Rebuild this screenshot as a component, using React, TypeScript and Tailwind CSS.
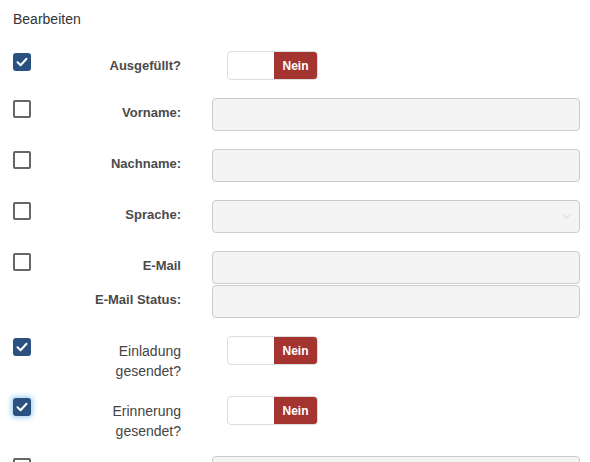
import { ChevronDown } from "lucide-react";

function CheckBox({ checked, focused }: { checked?: boolean; focused?: boolean }) {
  if (checked) {
    return (
      <div
        className={`mt-[2px] w-[18px] h-[18px] shrink-0 rounded-[3px] bg-[#2a5180] flex items-center justify-center ${
          focused ? "shadow-[0_0_5px_2px_rgba(102,175,233,0.55)]" : ""
        }`}
      >
        <svg width="12" height="10" viewBox="0 0 12 10" fill="none">
          <path d="M1.5 5.2 L4.6 8.2 L10.5 1.8" stroke="#fff" strokeWidth="2" strokeLinecap="round" strokeLinejoin="round" />
        </svg>
      </div>
    );
  }
  return <div className="mt-[2px] w-[18px] h-[18px] shrink-0 rounded-[2px] border-2 border-[#666] bg-white" />;
}

function Toggle() {
  return (
    <div className="ml-[15px] flex h-[29px] w-[91px] overflow-hidden rounded-[4px] border border-[#ddd] bg-white">
      <div className="w-[46px]" />
      <div className="flex flex-1 items-center justify-center bg-[#a3342f] text-[12px] font-bold text-white">
        Nein
      </div>
    </div>
  );
}

function Input({ select }: { select?: boolean }) {
  return (
    <div className="relative h-[33px] w-[368px] rounded-[4px] border border-[#ccc] bg-[#f4f4f4]">
      {select && (
        <ChevronDown className="absolute right-[6px] top-[9px] h-[13px] w-[13px] text-[#c4c4c4]" strokeWidth={1.5} />
      )}
    </div>
  );
}

function Row({
  check,
  label,
  children,
  className = "",
  light,
}: {
  check?: "on" | "off" | "focus" | "none";
  label: React.ReactNode;
  children: React.ReactNode;
  className?: string;
  light?: boolean;
}) {
  return (
    <div className={`flex items-start ${className}`}>
      <div className="w-[18px] shrink-0">
        {check === "on" && <CheckBox checked />}
        {check === "focus" && <CheckBox checked focused />}
        {check === "off" && <CheckBox />}
      </div>
      <div
        className={`w-[150px] shrink-0 pt-[5px] text-right leading-5 ${
          light ? "text-[14px] font-normal text-[#444]" : "text-[13px] font-bold text-[#4a4a4a]"
        }`}
      >
        {label}
      </div>
      <div className="ml-[31px]">{children}</div>
    </div>
  );
}

export default function App() {
  return (
    <div className="h-[462px] overflow-hidden bg-white pl-[13px] pt-[9px] font-['Liberation_Sans',Arial,sans-serif]">
      <h2 className="h-5 text-[14px] leading-5 text-[#333]">Bearbeiten</h2>

      <div className="mt-[22px]">
        <Row check="on" label="Ausgefüllt?" className="mb-[18px]">
          <Toggle />
        </Row>
        <Row check="off" label="Vorname:" className="mb-[18px]">
          <Input />
        </Row>
        <Row check="off" label="Nachname:" className="mb-[18px]">
          <Input />
        </Row>
        <Row check="off" label="Sprache:" className="mb-[18px]">
          <Input select />
        </Row>
        <Row check="off" label="E-Mail" className="mb-px">
          <Input />
        </Row>
        <Row check="none" label="E-Mail Status:" className="mb-[18px]">
          <Input />
        </Row>
        <Row check="on" light label={<>Einladung<br />gesendet?</>} className="h-[60px]">
          <Toggle />
        </Row>
        <Row check="focus" light label={<>Erinnerung<br />gesendet?</>} className="h-[60px]">
          <Toggle />
        </Row>
        <Row check="off" label="" className="mb-[18px]">
          <Input />
        </Row>
      </div>
    </div>
  );
}
